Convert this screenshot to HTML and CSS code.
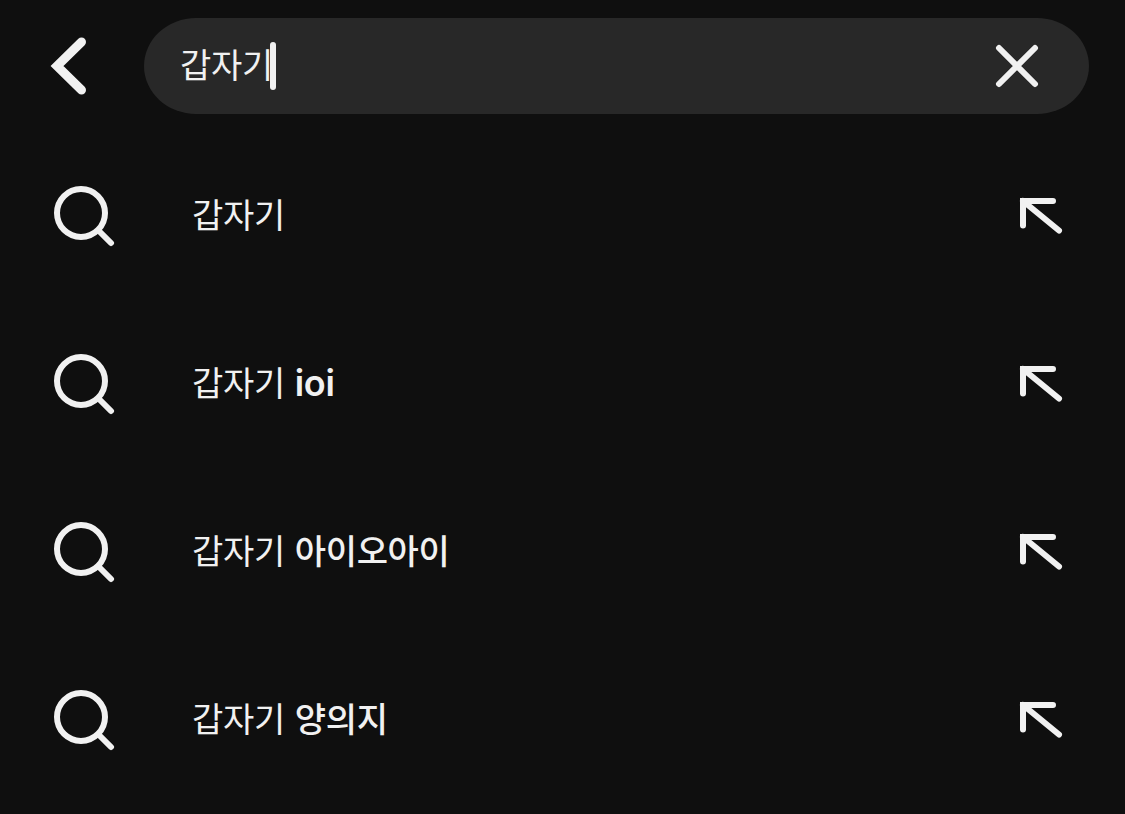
FILE: index.html
```html
<!DOCTYPE html>
<html lang="ko">
<head>
    <meta charset="UTF-8">
    <meta name="viewport" content="width=device-width, initial-scale=1.0">
    <title>검색</title>
    <link rel="stylesheet" href="styles.css">
</head>
<body>
    <!-- Shared icon shapes -->
    <svg class="icon-defs" aria-hidden="true">
        <symbol id="icon-search" viewBox="0 0 62 62">
            <circle cx="28" cy="28" r="24"/>
            <path d="M46 46 L58 58"/>
        </symbol>
        <symbol id="icon-insert" viewBox="0 0 44 38">
            <path d="M4 28.5 V4 H34"/>
            <path d="M4 4 L40 33.5"/>
        </symbol>
    </svg>

    <!-- Search bar -->
    <header class="search-header">
        <button class="back-button" aria-label="뒤로">
            <svg width="38" height="60" viewBox="0 0 38 60">
                <path d="M31.5 6 L7 30 L31.5 54"/>
            </svg>
        </button>
        <div class="search-field">
            <span class="query">갑자기</span><span class="caret"></span>
            <button class="clear-button" aria-label="지우기">
                <svg width="44" height="44" viewBox="0 0 44 44">
                    <path d="M4 4 L40 40 M40 4 L4 40"/>
                </svg>
            </button>
        </div>
    </header>

    <!-- Suggestions -->
    <ul class="suggestions">
        <li class="suggestion">
            <svg class="search-icon"><use href="#icon-search"/></svg>
            <span class="suggestion-text">갑자기</span>
            <svg class="insert-icon"><use href="#icon-insert"/></svg>
        </li>
        <li class="suggestion">
            <svg class="search-icon"><use href="#icon-search"/></svg>
            <span class="suggestion-text">갑자기 <b class="latin">ioi</b></span>
            <svg class="insert-icon"><use href="#icon-insert"/></svg>
        </li>
        <li class="suggestion">
            <svg class="search-icon"><use href="#icon-search"/></svg>
            <span class="suggestion-text">갑자기 <b>아이오아이</b></span>
            <svg class="insert-icon"><use href="#icon-insert"/></svg>
        </li>
        <li class="suggestion">
            <svg class="search-icon"><use href="#icon-search"/></svg>
            <span class="suggestion-text">갑자기 <b>양의지</b></span>
            <svg class="insert-icon"><use href="#icon-insert"/></svg>
        </li>
    </ul>
</body>
</html>
```
FILE: styles.css
```css
* {
    margin: 0;
    padding: 0;
    box-sizing: border-box;
}

body {
    font-family: 'Noto Sans CJK KR', sans-serif;
    font-size: 34px;
    letter-spacing: -0.3px;
    word-spacing: 0.5px;
    line-height: 48px;
    background: #0f0f0f;
    color: #f1f1f1;
    height: 100vh;
    overflow: hidden;
}

svg {
    display: block;
    fill: none;
    stroke: #f1f1f1;
    stroke-width: 6;
    stroke-linecap: round;
}

button {
    background: none;
    border: none;
}

.icon-defs {
    position: absolute;
    width: 0;
    height: 0;
}

/* Search bar */
.search-header {
    display: flex;
    align-items: center;
    height: 132px;
    padding: 0 36px 0 50px;
}

.back-button {
    width: 94px;
}

.back-button svg {
    stroke-width: 9;
}

.search-field {
    flex: 1;
    display: flex;
    align-items: center;
    height: 96px;
    padding: 0 50px 0 36px;
    background: #282828;
    border-radius: 52px / 48px;
}

.query {
    padding-bottom: 4px;
}

.caret {
    width: 6px;
    height: 48px;
    margin-left: -3px;
    border-radius: 3px;
    background: #f1f1f1;
}

.clear-button {
    margin-left: auto;
}

/* Suggestions */
.suggestions {
    list-style: none;
}

.suggestion {
    display: flex;
    align-items: center;
    height: 168px;
    padding: 0 62px 0 53px;
}

.search-icon {
    width: 62px;
    height: 62px;
}

.suggestion-text {
    flex: 1;
    margin-left: 77px;
    padding-bottom: 5px;
    white-space: nowrap;
}

.suggestion-text b {
    font-weight: 500;
}

.suggestion-text .latin {
    font-family: Inter, sans-serif;
    font-size: 36px;
    font-weight: 600;
    line-height: 1;
    letter-spacing: -0.3px;
}

.insert-icon {
    width: 44px;
    height: 38px;
}
```
